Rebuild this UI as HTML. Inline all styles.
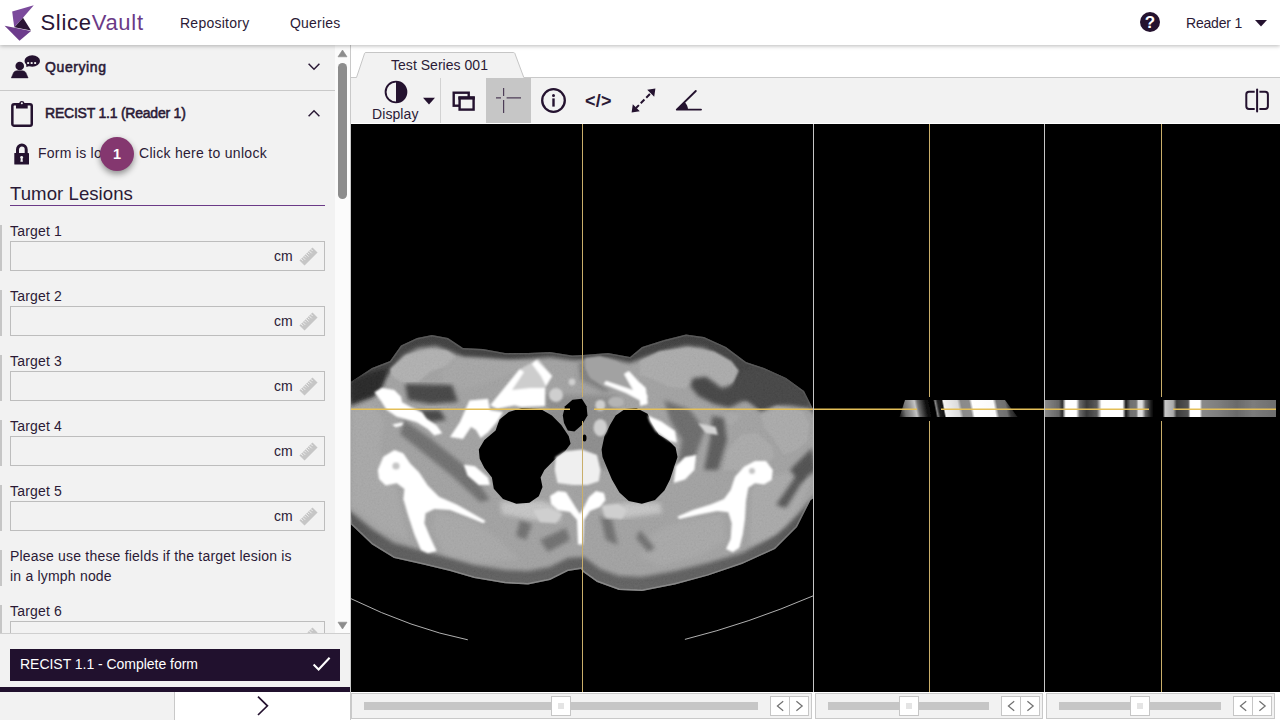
<!DOCTYPE html>
<html lang="en">
<head>
<meta charset="utf-8">
<title>SliceVault</title>
<style>
*{box-sizing:border-box;margin:0;padding:0}
html,body{width:1280px;height:720px;overflow:hidden;background:#fff}
body{font-family:"Liberation Sans",sans-serif;font-size:14px;color:#2b1a36;position:relative}
.abs{position:absolute}
.t{position:absolute;white-space:nowrap;line-height:20px}
svg{position:absolute;overflow:visible}
/* header */
#hdr{position:absolute;left:0;top:0;width:1280px;height:45px;background:#fff;box-shadow:0 1px 4px rgba(0,0,0,.28);z-index:5}
/* left panel */
#left{position:absolute;left:0;top:45px;width:335px;height:588px;background:#f2f2f2;overflow:hidden}
#sb{position:absolute;left:335px;top:45px;width:15px;height:588px;background:#fbfbfb}
#leftbot{position:absolute;left:0;top:633px;width:351px;height:87px;background:#f2f2f2;border-top:1px solid #cfcfcf}
.row{position:absolute;left:0;width:335px;border-bottom:1px solid #c9c9c9}
.bar{position:absolute;left:0;width:2px;background:#c6c6c6}
.lbl{position:absolute;left:10px;white-space:nowrap;line-height:20px}
.inp{position:absolute;left:10px;width:315px;height:30px;border:1px solid #bdbdbd;background:#f2f2f2}
.cm{position:absolute;left:274px;white-space:nowrap;line-height:20px}
/* viewer */
#viewer{position:absolute;left:350px;top:45px;width:930px;height:675px;background:#fff;border-left:1px solid #c9c9c9}
#tool{position:absolute;left:351px;top:77px;width:929px;height:46px;background:#f2f2f2;border-top:1px solid #c9c9c9}
#black{position:absolute;left:351px;top:124px;width:929px;height:568px;background:#000;overflow:hidden}
.sl{position:absolute;top:693px;height:26px;background:#f2f2f2;border:1px solid #c9c9c9}
.trk{position:absolute;top:702px;height:8px;background:#c6c6c6}
.thumb{position:absolute;top:696px;width:20px;height:20px;background:#fff;border:1px solid #c6c6c6}
.thumb i{position:absolute;left:6px;top:6px;width:6px;height:6px;background:#e4e4e4}
.btns{position:absolute;top:696px;width:39px;height:20px;background:#fff;border:1px solid #c6c6c6}
.btns b{position:absolute;left:18px;top:0;width:1px;height:18px;background:#c6c6c6}
.btns svg{left:0;top:0}
</style>
</head>
<body>

<!-- ================= LEFT PANEL ================= -->
<div id="left">
  <!-- Querying row : page y 45..90 -->
  <div class="row" style="top:0;height:46px"></div>
  <svg style="left:11px;top:10px" width="30" height="24" viewBox="0 0 30 24">
    <circle cx="8.75" cy="11" r="4.3" fill="#24122f"/>
    <path d="M0.3 22.9 L2.5 17.7 Q3.5 15.7 6 15.7 H11.4 Q13.9 15.7 14.9 17.7 L17.1 22.9 Z" fill="#24122f" stroke="#24122f" stroke-width=".5" stroke-linejoin="round"/>
    <ellipse cx="21.25" cy="6" rx="7.75" ry="5.75" fill="#24122f"/>
    <path d="M15.2 8.2 L15.4 11.9 L19.6 10.8 Z" fill="#24122f"/>
    <rect x="16.2" y="7.1" width="1.9" height="1.9" fill="#f2f2f2"/><rect x="19.7" y="7.1" width="1.9" height="1.9" fill="#f2f2f2"/><rect x="23.2" y="7.1" width="1.9" height="1.9" fill="#f2f2f2"/>
  </svg>
  <span class="t" style="left:45px;top:12px;-webkit-text-stroke:.55px #2b1a36;letter-spacing:.6px">Querying</span>
  <svg style="left:307px;top:17px" width="14" height="10" viewBox="0 0 14 10"><path d="M1.6 1.8 L7 7.2 L12.4 1.8" fill="none" stroke="#2b1a36" stroke-width="1.5"/></svg>

  <!-- RECIST row : page y 91..135 -->
  <svg style="left:10px;top:54px" width="24" height="29" viewBox="0 0 24 29">
    <rect x="2.35" y="5.25" width="19.4" height="21.5" rx="1.8" fill="none" stroke="#24122f" stroke-width="2.5"/>
    <path d="M6 4.3 H9.1 A2.8 2.8 0 0 1 14.6 4.3 H17.7 V9.4 H6 Z" fill="#24122f"/>
    <circle cx="11.85" cy="4.3" r="1.05" fill="#f2f2f2"/>
  </svg>
  <span class="t" style="left:45px;top:58px;-webkit-text-stroke:.55px #2b1a36;letter-spacing:-.22px">RECIST 1.1 (Reader 1)</span>
  <svg style="left:307px;top:63px" width="14" height="10" viewBox="0 0 14 10"><path d="M1.6 8.2 L7 2.8 L12.4 8.2" fill="none" stroke="#2b1a36" stroke-width="1.5"/></svg>

  <!-- lock row -->
  <svg style="left:13px;top:97px" width="17" height="24" viewBox="0 0 17 24">
    <path d="M4.5 12 V7.45 A4.35 4.35 0 0 1 13.2 7.45 V12" fill="none" stroke="#24122f" stroke-width="3"/>
    <rect x="1.3" y="11" width="14.7" height="11.5" rx=".6" fill="#24122f"/>
    <circle cx="8.65" cy="15.4" r="1.45" fill="#f2f2f2"/><path d="M7.9 15.8 H9.4 L9.9 19.8 H7.4 Z" fill="#f2f2f2"/>
  </svg>
  <span class="t" style="left:38px;top:98px;letter-spacing:.25px;width:90px;overflow:hidden">Form is locked.</span>
  <span class="t" style="left:139px;top:98px;letter-spacing:.29px">Click here to unlock</span>
  <div class="abs" style="left:100px;top:92px;width:34px;height:34px;border-radius:50%;background:#84376f;box-shadow:0 3px 6px rgba(0,0,0,.42)"></div>
  <span class="t" style="left:100px;top:99px;width:34px;text-align:center;color:#fff;font-weight:700;font-size:14.5px">1</span>

  <!-- heading -->
  <span class="t" style="left:10px;top:137px;font-size:18.6px;line-height:24px;letter-spacing:.05px">Tumor Lesions</span>
  <div class="abs" style="left:10px;top:160px;width:315px;height:1px;background:#6b3a87"></div>

  <!-- fields -->
  <div class="bar" style="top:180px;height:46px"></div>
  <span class="lbl" style="top:176px;letter-spacing:.18px">Target 1</span>
  <div class="inp" style="top:196px"></div><span class="cm" style="top:201px">cm</span><svg style="left:298px;top:201px" width="21" height="21" viewBox="0 0 21 21"><g transform="translate(10.5 10.5) rotate(-45)"><rect x="-9.2" y="-3.6" width="18.4" height="7.2" fill="#c6c6c6"/><path d="M-7 -3.6v2.6M-4.7 -3.6v3.6M-2.4 -3.6v2.6M-0.1 -3.6v3.6M2.2 -3.6v2.6M4.5 -3.6v3.6M6.8 -3.6v2.6" stroke="#f2f2f2" stroke-width=".9" fill="none"/></g></svg>

  <div class="bar" style="top:245px;height:46px"></div>
  <span class="lbl" style="top:241px;letter-spacing:.18px">Target 2</span>
  <div class="inp" style="top:261px"></div><span class="cm" style="top:266px">cm</span><svg style="left:298px;top:266px" width="21" height="21" viewBox="0 0 21 21"><g transform="translate(10.5 10.5) rotate(-45)"><rect x="-9.2" y="-3.6" width="18.4" height="7.2" fill="#c6c6c6"/><path d="M-7 -3.6v2.6M-4.7 -3.6v3.6M-2.4 -3.6v2.6M-0.1 -3.6v3.6M2.2 -3.6v2.6M4.5 -3.6v3.6M6.8 -3.6v2.6" stroke="#f2f2f2" stroke-width=".9" fill="none"/></g></svg>

  <div class="bar" style="top:310px;height:46px"></div>
  <span class="lbl" style="top:306px;letter-spacing:.18px">Target 3</span>
  <div class="inp" style="top:326px"></div><span class="cm" style="top:331px">cm</span><svg style="left:298px;top:331px" width="21" height="21" viewBox="0 0 21 21"><g transform="translate(10.5 10.5) rotate(-45)"><rect x="-9.2" y="-3.6" width="18.4" height="7.2" fill="#c6c6c6"/><path d="M-7 -3.6v2.6M-4.7 -3.6v3.6M-2.4 -3.6v2.6M-0.1 -3.6v3.6M2.2 -3.6v2.6M4.5 -3.6v3.6M6.8 -3.6v2.6" stroke="#f2f2f2" stroke-width=".9" fill="none"/></g></svg>

  <div class="bar" style="top:375px;height:46px"></div>
  <span class="lbl" style="top:371px;letter-spacing:.18px">Target 4</span>
  <div class="inp" style="top:391px"></div><span class="cm" style="top:396px">cm</span><svg style="left:298px;top:396px" width="21" height="21" viewBox="0 0 21 21"><g transform="translate(10.5 10.5) rotate(-45)"><rect x="-9.2" y="-3.6" width="18.4" height="7.2" fill="#c6c6c6"/><path d="M-7 -3.6v2.6M-4.7 -3.6v3.6M-2.4 -3.6v2.6M-0.1 -3.6v3.6M2.2 -3.6v2.6M4.5 -3.6v3.6M6.8 -3.6v2.6" stroke="#f2f2f2" stroke-width=".9" fill="none"/></g></svg>

  <div class="bar" style="top:440px;height:46px"></div>
  <span class="lbl" style="top:436px;letter-spacing:.18px">Target 5</span>
  <div class="inp" style="top:456px"></div><span class="cm" style="top:461px">cm</span><svg style="left:298px;top:461px" width="21" height="21" viewBox="0 0 21 21"><g transform="translate(10.5 10.5) rotate(-45)"><rect x="-9.2" y="-3.6" width="18.4" height="7.2" fill="#c6c6c6"/><path d="M-7 -3.6v2.6M-4.7 -3.6v3.6M-2.4 -3.6v2.6M-0.1 -3.6v3.6M2.2 -3.6v2.6M4.5 -3.6v3.6M6.8 -3.6v2.6" stroke="#f2f2f2" stroke-width=".9" fill="none"/></g></svg>

  <div class="bar" style="top:505px;height:36px"></div>
  <span class="lbl" style="top:501px;letter-spacing:.2px">Please use these fields if the target lesion is</span>
  <span class="lbl" style="top:521px;letter-spacing:.2px">in a lymph node</span>

  <div class="bar" style="top:560px;height:46px"></div>
  <span class="lbl" style="top:556px;letter-spacing:.18px">Target 6</span>
  <div class="inp" style="top:576px"></div><svg style="left:298px;top:581px" width="21" height="21" viewBox="0 0 21 21"><g transform="translate(10.5 10.5) rotate(-45)"><rect x="-9.2" y="-3.6" width="18.4" height="7.2" fill="#c6c6c6"/><path d="M-7 -3.6v2.6M-4.7 -3.6v3.6M-2.4 -3.6v2.6M-0.1 -3.6v3.6M2.2 -3.6v2.6M4.5 -3.6v3.6M6.8 -3.6v2.6" stroke="#f2f2f2" stroke-width=".9" fill="none"/></g></svg>
</div>

<!-- scrollbar -->
<div id="sb">
  <svg style="left:3px;top:5px" width="9" height="7" viewBox="0 0 9 7"><path d="M0 6.8 L4.5 0 L9 6.8 Z" fill="#8c8c8c" stroke="#8c8c8c" stroke-width=".6" stroke-linejoin="round"/></svg>
  <div class="abs" style="left:3px;top:18px;width:9px;height:136px;border-radius:4.5px;background:#8c8c8c"></div>
  <svg style="left:3px;top:577px" width="9" height="7" viewBox="0 0 9 7"><path d="M0 0.2 L4.5 7 L9 0.2 Z" fill="#8c8c8c" stroke="#8c8c8c" stroke-width=".6" stroke-linejoin="round"/></svg>
</div>

<!-- bottom of left panel -->
<div id="leftbot">
  <div class="abs" style="left:10px;top:15px;width:330px;height:32px;background:#21112e"></div>
  <span class="t" style="left:20px;top:20px;color:#fff;letter-spacing:-.03px">RECIST 1.1 - Complete form</span>
  <svg style="left:312px;top:22px" width="20" height="16" viewBox="0 0 20 16"><path d="M1.6 8.6 L6.6 13.4 L17.6 1.8" fill="none" stroke="#fff" stroke-width="2.1"/></svg>
  <div class="abs" style="left:0;top:53px;width:350px;height:5px;background:#21112e"></div>
  <div class="abs" style="left:174px;top:58px;width:177px;height:28px;background:#fff;border-left:1px solid #c9c9c9"></div>
  <svg style="left:255.5px;top:61px" width="14" height="22" viewBox="0 0 14 22"><path d="M2 1.6 L11.4 10.8 L2 20" fill="none" stroke="#24122f" stroke-width="1.7"/></svg>
</div>

<!-- ================= VIEWER ================= -->
<div id="viewer"></div>
<div id="tool"></div>
<!-- tab -->
<svg style="left:351px;top:50px" width="180" height="30" viewBox="0 0 180 30">
  <path d="M5.2 28.6 L5.5 27.5 L13.6 3.3 Q13.9 2.5 15 2.5 L162.3 2.5 Q163.4 2.5 163.8 3.3 L172.8 27.5 L173.2 28.6 Z" fill="#f2f2f2"/>
  <path d="M5.5 27.5 L13.6 3.3 Q13.9 2.5 15 2.5 L162.3 2.5 Q163.4 2.5 163.8 3.3 L172.8 27.5" fill="none" stroke="#c6c6c6" stroke-width="1"/>
</svg>
<span class="t" style="left:391px;top:55px;letter-spacing:.03px">Test Series 001</span>
<!-- toolbar icons -->
<div class="abs" style="left:486px;top:78px;width:45px;height:45px;background:#c6c6c6"></div>
<div class="abs" style="left:440px;top:78px;width:1px;height:45px;background:#d2d2d2"></div>
<svg style="left:383.6px;top:80.4px" width="24" height="24" viewBox="0 0 24 24">
  <circle cx="12" cy="12" r="10.4" fill="none" stroke="#24122f" stroke-width="1.9"/>
  <path d="M12 1.6 A10.4 10.4 0 0 1 12 22.4 Z" fill="#24122f"/>
</svg>
<span class="t" style="left:372px;top:104px;letter-spacing:.08px">Display</span>
<svg style="left:422px;top:97px" width="14" height="8" viewBox="0 0 14 8"><path d="M1 0.8 H13 L7 7.4 Z" fill="#24122f"/></svg>
<svg style="left:451px;top:90px" width="25" height="22" viewBox="0 0 25 22">
  <rect x="2.7" y="2.7" width="15" height="13" fill="none" stroke="#24122f" stroke-width="2.4"/>
  <rect x="8.6" y="7.6" width="14" height="12" fill="#f2f2f2" stroke="#24122f" stroke-width="2.4"/>
  <rect x="7.4" y="6.4" width="16.4" height="3.2" fill="#24122f"/>
</svg>
<svg style="left:494px;top:86px" width="30" height="30" viewBox="0 0 30 30">
  <path d="M9.6 2 V10 M9.6 14 V27 M2 11.9 H7 M12.6 11.9 H27" fill="none" stroke="#4d3d57" stroke-width="1.2"/>
</svg>
<svg style="left:540px;top:87px" width="27" height="27" viewBox="0 0 27 27">
  <circle cx="13.5" cy="13.5" r="11.3" fill="none" stroke="#24122f" stroke-width="2.3"/>
  <circle cx="13.5" cy="8.4" r="1.5" fill="#24122f"/>
  <rect x="12.3" y="11.4" width="2.4" height="8.2" fill="#24122f"/>
</svg>
<span class="t" style="left:585px;top:90px;font-size:18px;font-weight:700;line-height:22px;letter-spacing:.3px">&lt;/&gt;</span>
<svg style="left:630px;top:87px" width="27" height="27" viewBox="0 0 27 27">
  <path d="M25.4 1.6 L17.2 2.8 L24.2 9.8 Z M1.6 25.4 L9.8 24.2 L2.8 17.2 Z" fill="#24122f"/>
  <path d="M21 6 L6 21" fill="none" stroke="#24122f" stroke-width="2" stroke-dasharray="5.2 2.6" stroke-dashoffset="-1.5"/>
</svg>
<svg style="left:675px;top:89px" width="28" height="23" viewBox="0 0 28 23">
  <path d="M20.8 2 L1.8 20.6 H26" fill="none" stroke="#24122f" stroke-width="1.9" stroke-linejoin="round" stroke-linecap="round"/>
  <path d="M1.8 20.6 L9.6 13 A11 11 0 0 1 13 20.6 Z" fill="#24122f"/>
</svg>
<svg style="left:1244px;top:87px" width="27" height="27" viewBox="0 0 27 27">
  <path d="M10.7 4.8 H5 Q2.3 4.8 2.3 7.5 V19.3 Q2.3 22 5 22 H10.7 M15.4 4.8 H21.2 Q23.9 4.8 23.9 7.5 V19.3 Q23.9 22 21.2 22 H15.4" fill="none" stroke="#24122f" stroke-width="2"/>
  <path d="M13.1 2.4 V24.6" stroke="#24122f" stroke-width="2" stroke-linecap="round"/>
</svg>
<div id="black"><!--CT--><svg style="left:0;top:0" width="929" height="568" viewBox="351 124 929 568">
  <defs>
    <filter id="b0" x="-10%" y="-10%" width="120%" height="120%"><feGaussianBlur stdDeviation="0.6"/></filter>
    <filter id="b1" x="-10%" y="-10%" width="120%" height="120%"><feGaussianBlur stdDeviation="1"/></filter>
    <filter id="b2" x="-10%" y="-10%" width="120%" height="120%"><feGaussianBlur stdDeviation="2"/></filter>
    <filter id="b3" x="-20%" y="-20%" width="140%" height="140%"><feGaussianBlur stdDeviation="3.5"/></filter>
    <filter id="nz" x="0" y="0" width="100%" height="100%"><feTurbulence type="fractalNoise" baseFrequency=".55" numOctaves="2" seed="7"/><feColorMatrix type="matrix" values=".4 .4 .4 0 -.1  .4 .4 .4 0 -.1  .4 .4 .4 0 -.1  0 0 0 0 1"/></filter>
    <linearGradient id="fat" gradientUnits="userSpaceOnUse" x1="0" y1="335" x2="0" y2="590"><stop offset="0" stop-color="#363636"/><stop offset=".45" stop-color="#3e3e3e"/><stop offset="1" stop-color="#5c5c5c"/></linearGradient>
    <linearGradient id="skin" gradientUnits="userSpaceOnUse" x1="0" y1="335" x2="0" y2="590"><stop offset="0" stop-color="#505050"/><stop offset=".5" stop-color="#5c5c5c"/><stop offset="1" stop-color="#8c8c8c"/></linearGradient>
    <clipPath id="ax"><rect x="351" y="124" width="462" height="568"/></clipPath>
        <clipPath id="body"><path d="M345 386 L372 368 L390 361 L401 345.5 L417 338 L432 335 L448 338 L463 348 L483 349 L505 353 L528 353 L550 352 L572 355.5 L583 355 L608 353 L630 357 L642 347 L664 340 L686 334.5 L704 337 L726 347 L746 362 L764 368 L786 378 L804 391 L813 409 L822 450 L814 498 L810.6 500 L797 527 L775 549 L742 564 L708 575.6 L675 584.4 L642 591 L619 590 L597 582 L583 572 L581 569 L568 571 L550 580 L528 584.4 L505 583.3 L474 578 L450 571 L423 564.4 L394 558 L372 544.4 L351 524.4 L340 450 Z"/></clipPath>
  </defs>
  <g clip-path="url(#ax)">
    <!-- skin / fat -->
    <path filter="url(#b0)" fill="url(#fat)" d="M345 386 L372 368 L390 361 L401 345.5 L417 338 L432 335 L448 338 L463 348 L483 349 L505 353 L528 353 L550 352 L572 355.5 L583 355 L608 353 L630 357 L642 347 L664 340 L686 334.5 L704 337 L726 347 L746 362 L764 368 L786 378 L804 391 L813 409 L822 450 L814 498 L810.6 500 L797 527 L775 549 L742 564 L708 575.6 L675 584.4 L642 591 L619 590 L597 582 L583 572 L581 569 L568 571 L550 580 L528 584.4 L505 583.3 L474 578 L450 571 L423 564.4 L394 558 L372 544.4 L351 524.4 L340 450 Z"/>
    <g clip-path="url(#body)"><path filter="url(#b0)" fill="none" stroke="url(#skin)" stroke-opacity=".85" stroke-width="3" d="M345 386 L372 368 L390 361 L401 345.5 L417 338 L432 335 L448 338 L463 348 L483 349 L505 353 L528 353 L550 352 L572 355.5 L583 355 L608 353 L630 357 L642 347 L664 340 L686 334.5 L704 337 L726 347 L746 362 L764 368 L786 378 L804 391 L813 409 L822 450 L814 498 L810.6 500 L797 527 L775 549 L742 564 L708 575.6 L675 584.4 L642 591 L619 590 L597 582 L583 572 L581 569 L568 571 L550 580 L528 584.4 L505 583.3 L474 578 L450 571 L423 564.4 L394 558 L372 544.4 L351 524.4 L340 450 Z"/></g>
    <g clip-path="url(#body)">
      <!-- muscle mass -->
      <path filter="url(#b2)" fill="#a0a0a0" d="M346 401 L372 396 L388 374 L403 356 L418 348 L436 346 L452 352 L464 358 L484 359 L506 361 L528 359 L550 357 L572 360 L584 360 L608 358 L630 363 L646 357 L664 351 L686 346 L704 348 L722 358 L736 372 L730 392 L760 408 L790 402 L808 406 L820 420 L820 490 L800 512 L785 527 L768 539 L742 553 L708 563 L675 571 L642 577 L619 576 L600 569 L584 557 L568 558 L550 567 L528 571 L505 570 L474 565 L450 558 L423 551 L394 543 L372 529 L346 508 Z"/>
      <!-- brighter muscles -->
      <path filter="url(#b1)" fill="#afafaf" d="M390 369 L406 355 L430 349 L447 350.5 L456 357 L447 366 L430 372 L418 382 L403 383 L392 376 Z"/>
      <path filter="url(#b2)" fill="#a4a4a4" d="M456 357 L519 361 L540 362 L500 378 L470 388 L447 388 L440 374 Z"/>
      <path filter="url(#b1)" fill="#aaa" d="M640 361 L659 351.4 L688.6 347.5 L714 351.4 L731.4 361 L739 371 L733 382.5 L721.7 387.4 L712 380.6 L704 376.7 L694.4 380.6 L684.7 388.3 L669 386.4 L651.7 378.6 L640 374.7 Z"/>
      <path filter="url(#b1)" fill="#a9a9a9" d="M760.5 413.6 L776 405.8 L801.4 409.7 L809 423.3 L807 440.8 L795.5 450.6 L784 454.4 L774 439 L764.4 427.2 Z"/>
      <path filter="url(#b1)" fill="#a9a9a9" d="M727.5 450.6 L741 435 L756.7 433 L772 446.7 L774 456.4 L760.5 470 L723.6 470 Z"/>
      <path filter="url(#b1)" fill="#a6a6a6" d="M721.7 415.6 L731.4 411.7 L741 415.6 L733 425 L723.6 423.3 Z"/>
      <path filter="url(#b2)" fill="#a6a6a6" d="M352 410 L372 404 L384 420 L380 450 L396 488 L408 540 L380 528 L352 505 Z"/>
      <path filter="url(#b2)" fill="#a6a6a6" d="M436 512 L470 520 L500 540 L520 560 L480 562 L445 554 L432 530 Z"/>
      <path filter="url(#b2)" fill="#a6a6a6" d="M668 525 L722 514 L726 540 L700 556 L660 566 L640 556 L650 536 Z"/>
      <path filter="url(#b2)" fill="#a8a8a8" d="M752 490 L776 476 L800 470 L812 480 L796 512 L776 534 L750 545 Z"/>
      <!-- dark fat pockets -->
      <path filter="url(#b2)" fill="#3e3e3e" d="M405 384 L452 385 L458 402 L430 404 L408 400 Z"/>
      <path filter="url(#b2)" fill="#3c3c3c" d="M692.5 378.6 L706 376.7 L721.7 388.3 L735.3 384.4 L741 371 L760.5 369 L787.8 378.6 L805.3 396 L811 407.8 L776 404 L760.5 411.7 L749 398 L729.4 407.8 L714 404 L698.3 396 L690.6 386.4 Z"/>
      <path filter="url(#b2)" fill="#1c1c1c" d="M350 380 L372 372 L388 368 L382 388 L374 396 L350 406 Z"/>
      <path filter="url(#b2)" fill="#6a6a6a" d="M404 420 L430 438 L470 470 L490 500 L480 502 L452 476 L420 450 L400 434 Z"/>
      <path filter="url(#b2)" fill="#666" d="M664 400 L690 410 L705 430 L690 470 L676 474 L682 440 L670 420 Z"/>
      <path filter="url(#b2)" fill="#555" d="M712 416 L724 418 L727 440 L718 470 L704 470 L710 440 Z"/>
      <path filter="url(#b2)" fill="#505050" d="M776 505 L800 470 L806 476 L786 508 Z"/>
      <path filter="url(#b2)" fill="#484848" d="M790 470 L812 448 L816 470 L800 482 Z"/>
      <path filter="url(#b2)" fill="#6a6a6a" d="M600 515 L612 520 L618 545 L606 540 Z M540 540 L566 528 L570 540 L548 552 Z M640 530 L655 548 L648 552 L636 538 Z M520 520 L532 524 L526 540 L516 536 Z"/>
      <path filter="url(#b2)" fill="#3c3c3c" d="M412 410 L440 410 L446 420 L430 422 Z"/>
      <!-- center mediastinum / neck tissue -->
      <path filter="url(#b2)" fill="#8a8a8a" d="M545 395 L620 395 L615 440 L606 470 L556 470 L550 440 Z"/>
      <path filter="url(#b2)" fill="#7c7c7c" d="M578 362 L610 362 L626 384 L604 392 L580 380 Z"/>
      <!-- light bands along lung bottoms (ribs) -->
      <path filter="url(#b2)" fill="#c4c4c4" d="M500 502 L542 501 L562 508 L560 522 L534 520 L502 514 Z"/>
      <path filter="url(#b2)" fill="#c4c4c4" d="M602 506 L627 503 L660 503 L662 513 L626 518 L604 518 Z"/>
      <rect x="351" y="330" width="462" height="265" filter="url(#nz)" opacity=".1"/>
    </g>
    <!-- lungs -->
    <path filter="url(#b0)" fill="#000" d="M478.8 449.4 L484.4 440 L495.6 430.6 L499.4 419.4 L508.8 411.9 L521.9 408 L540.6 409 L551.9 415.6 L561.3 425 L568.8 436.3 L570.6 443.8 L565 451.3 L553.8 460.6 L544.4 470 L540.6 477.5 L542.5 486.9 L538.8 496.3 L529.4 502.8 L516.3 503.8 L503 499 L493.8 488.8 L491.9 477.5 L484.4 468 L479.7 458.8 Z"/>
    <path filter="url(#b0)" fill="#000" d="M601.6 449.4 L604.4 436.3 L610 425 L615.6 415.6 L625 409 L636.3 408 L647.5 413.8 L653 425 L658.8 434.4 L668 440 L675.6 447.5 L677.5 456.9 L673.8 468 L670 479.4 L664.4 490.6 L655 500 L641.9 503.8 L628.8 501 L619.4 492.5 L611.9 479.4 L606.3 466.3 L602.5 456.9 Z"/>
    <!-- trachea -->
    <path filter="url(#b0)" fill="#000" d="M562.8 415.6 L565 406.3 L572.5 399.7 L581.9 398.8 L586.6 406.3 L587.5 415.6 L581.9 425 L574.4 431.6 L567.8 430.6 L564 423 Z"/>
    <ellipse cx="584.5" cy="438" rx="2" ry="3.6" fill="#000"/>
    <!-- vessels -->
    <g filter="url(#b1)" fill="#cfcfcf">
      <circle cx="556" cy="395" r="7"/><circle cx="572" cy="382" r="3.4"/>
      <ellipse cx="600.3" cy="427.7" rx="6.8" ry="8.6"/><ellipse cx="600.3" cy="405.3" rx="5" ry="5.6"/>
      <ellipse cx="616" cy="402" rx="8" ry="5.4" fill="#b4b4b4"/>
    </g>
    <!-- bones -->
    <g filter="url(#b1)" fill="#fff">
      <!-- left humerus / coracoid -->
      <path d="M374.4 392.2 L382.2 387.8 L394.4 390 L401 396.7 L402.2 402.2 L412.2 407.8 L422.2 412.2 L426.7 419 L436.7 425.6 L442.2 433.3 L434.4 435.6 L427.8 429 L416.7 422.2 L405.6 419 L396.7 416.7 L386.7 410 L381 401 Z"/><path d="M392.2 424.4 L403.3 422.2 L402.2 425.6 L395.6 427.2 Z"/>
      <!-- 1st rib left -->
      <path d="M450 437 L460 422 L469.4 400.6 L488 398.8 L490 410 L503 411.9 L497.5 421.3 L488 432.5 L480.6 438 L476 430 L471 427 L463 439 Z"/>
      <!-- left clavicle -->
      <path d="M490.3 405.3 L519.5 369.2 L538.4 358.9 L552.2 376 L545.3 388 L543.6 396.7 L514.4 405.3 L497.2 408.8 Z" fill="#cdcdcd"/>
      <path d="M490.3 405.3 L506 386 L519.5 369.2 L524 372 L512 390 L530 388 L545.3 388 L545 406 L521 407 L514.4 405.3 L497.2 408.8 Z"/>
      <path d="M536 360 L552.2 376 L546 386 L541 376 L532 364 Z"/>
      <!-- right clavicle -->
      <path d="M585 358 L600 356 L617.5 362 L629.5 372.7 L645 390 L648.4 400 L640 403.6 L626 396.7 L605.5 388 L590 378 L585 368 Z" fill="#a2a2a2"/>
      <path d="M603.8 384 L626 393 L641 401 L648 397 L640 383 L629 371 L624 374 L633 390 L606 381 Z"/>
      <path d="M640 382.5 L645.8 388 L647.8 404 L640 406 Z"/>
      <!-- right 1st rib -->
      <path d="M647.8 415.6 L661.4 421.4 L675 431 L677 442.8 L669 440.8 L655.6 431 L649.7 421.4 Z"/>
      <path d="M698 423 L715.8 427 L717.8 435 L706 433 Z" fill="#d4d4d4"/>
      <!-- left scapula -->
      <path d="M377.8 470 L383.3 456.7 L394.4 450 L403.3 453.3 L410 463.3 L419 472.2 L427.8 485.6 L439 496.7 L456.7 504.4 L474.4 514.4 L485.6 521 L483.3 523.3 L470 517.8 L450 510 L434.4 509 L425.6 513.3 L424.4 523.3 L430 536.7 L436.7 551 L427.8 553.3 L421 550 L414.4 534.4 L407.8 514.4 L403.3 499 L404.4 489 L396.7 483.3 L385.6 485.6 L379 479 Z"/>
      <!-- right scapula -->
      <path d="M735 476.7 L744 466.7 L755 461 L766 461 L772.8 470 L771.7 480 L764 484.4 L755 483.3 L748.3 487.8 L746 501 L745 519 L742.8 534.4 L739.4 547.8 L732.8 552.2 L726 549 L730.6 539 L731.7 523.3 L728.3 512.2 L717.2 511 L699.4 514.4 L679.4 519 L677.2 516.7 L692.8 510 L710.6 504.4 L724 499 L730.6 490 Z"/>
      <!-- ribs near lungs -->
      <path d="M463.8 464.4 L475 466.3 L488 477.5 L490 485 L478.8 485 L467.5 475.6 Z"/>
      <path d="M675.6 466.3 L685 457 L696.3 455 L694.4 470 L685 479.4 L673.8 483 Z"/>
      <!-- vertebra -->
      <path d="M555.6 457 L565 451.3 L582 449.4 L597 455 L600.6 470 L598.8 481.3 L587.5 485 L572.5 485 L557.5 483 L554.7 470 Z" fill="#efefef"/>
      <path d="M550 496 L558 491 L566 492 L571 500 L576 508 L580 514 L584 507 L589 497 L596 491 L604 493 L605.6 500 L600 507 L590 511 L584 520 L583 544.4 L578 544.4 L577 520 L570 512 L558 510 L551 504 Z"/>
      <path d="M533 510 L548 508 L562 514 L556 523 L540 522 Z" fill="#cfcfcf"/>
      <path d="M602 506 L618 504 L627 510 L622 519 L606 517 Z" fill="#cfcfcf"/>
    </g>
    <!-- scapula marrow -->
    <g filter="url(#b1)" fill="#c4c4c4"><circle cx="396" cy="466" r="3.6"/><circle cx="752" cy="471" r="3"/></g>
    <!-- table lines -->
    <path d="M351 598.7 Q412.6 628.7 467.8 639.8" fill="none" stroke="#c4c4c4" stroke-width=".9"/>
    <path d="M684.9 639.4 Q748.9 623.4 813 595.9" fill="none" stroke="#c4c4c4" stroke-width=".9"/>
  </g>

  <!-- sagittal strip -->
  <defs>
    <linearGradient id="gs" gradientUnits="userSpaceOnUse" x1="899" y1="0" x2="1018" y2="0" gradientTransform="translate(0 408.5) skewX(11) translate(0 -408.5)">
      <stop offset="0" stop-color="#222"/><stop offset=".05" stop-color="#777"/><stop offset=".1" stop-color="#9a9a9a"/><stop offset=".14" stop-color="#c4c4c4"/><stop offset=".165" stop-color="#707070"/><stop offset=".2" stop-color="#3c3c3c"/><stop offset=".235" stop-color="#0a0a0a"/><stop offset=".3" stop-color="#000"/><stop offset=".315" stop-color="#888"/><stop offset=".335" stop-color="#222"/><stop offset=".37" stop-color="#111"/><stop offset=".385" stop-color="#f4f4f4"/><stop offset=".5" stop-color="#dcdcdc"/><stop offset=".53" stop-color="#8a8a8a"/><stop offset=".6" stop-color="#8c8c8c"/><stop offset=".625" stop-color="#fff"/><stop offset=".8" stop-color="#fafafa"/><stop offset=".83" stop-color="#777"/><stop offset=".9" stop-color="#707070"/><stop offset=".93" stop-color="#3a3a3a"/><stop offset="1" stop-color="#111"/>
    </linearGradient>
    <linearGradient id="gc" gradientUnits="userSpaceOnUse" x1="1045" y1="0" x2="1276" y2="0">
      <stop offset="0" stop-color="#8a8a8a"/><stop offset=".06" stop-color="#666"/><stop offset=".075" stop-color="#2c2c2c"/><stop offset=".09" stop-color="#fff"/><stop offset=".135" stop-color="#fff"/><stop offset=".15" stop-color="#6c6c6c"/><stop offset=".18" stop-color="#3a3a3a"/><stop offset=".225" stop-color="#5c5c5c"/><stop offset=".245" stop-color="#fff"/><stop offset=".335" stop-color="#fff"/><stop offset=".35" stop-color="#1c1c1c"/><stop offset=".37" stop-color="#707070"/><stop offset=".395" stop-color="#777"/><stop offset=".405" stop-color="#e0e0e0"/><stop offset=".42" stop-color="#ddd"/><stop offset=".435" stop-color="#666"/><stop offset=".46" stop-color="#1a1a1a"/><stop offset=".47" stop-color="#000"/><stop offset=".51" stop-color="#000"/><stop offset=".52" stop-color="#c8c8c8"/><stop offset=".555" stop-color="#aaa"/><stop offset=".57" stop-color="#3c3c3c"/><stop offset=".62" stop-color="#555"/><stop offset=".63" stop-color="#fff"/><stop offset=".67" stop-color="#fff"/><stop offset=".68" stop-color="#8a8a8a"/><stop offset=".75" stop-color="#7e7e7e"/><stop offset=".83" stop-color="#6a6a6a"/><stop offset=".9" stop-color="#7c7c7c"/><stop offset="1" stop-color="#6e6e6e"/>
    </linearGradient>
  </defs>
  <path filter="url(#b0)" fill="url(#gs)" d="M905 400 L1005 400 L1017.5 417 L899.5 417 Z"/>
  <rect filter="url(#b0)" x="1045" y="400" width="231" height="17" fill="url(#gc)"/>
  <!-- panel separators -->
  <rect x="813" y="124" width="1" height="568" fill="#c6c6c6"/>
  <rect x="1044" y="124" width="1" height="568" fill="#c6c6c6"/>
  <!-- crosshairs -->
  <g fill="#c9ae6a">
    <rect x="582" y="124" width="1" height="273"/><rect x="582" y="421" width="1" height="271"/>
    <rect x="929" y="124" width="1" height="273"/><rect x="929" y="421" width="1" height="271"/>
    <rect x="1161" y="124" width="1" height="273"/><rect x="1161" y="421" width="1" height="271"/>
  </g>
  <g fill="#e4bf58">
    <rect x="351" y="408.5" width="219" height="1.5"/><rect x="594" y="408.5" width="219" height="1.5"/>
    <rect x="814" y="408.5" width="103" height="1.5"/><rect x="941" y="408.5" width="103" height="1.5"/>
    <rect x="1045" y="408.5" width="104" height="1.5"/><rect x="1173" y="408.5" width="103" height="1.5"/>
  </g>
</svg>
<!--/CT--></div>

<!-- sliders -->
<div class="sl" style="left:351px;width:461px"></div>
<div class="trk" style="left:364px;width:394px"></div>
<div class="thumb" style="left:551px"><i></i></div>
<div class="btns" style="left:770px"><b></b><svg width="37" height="18" viewBox="0 0 37 18"><path d="M12.2 4.2 L6.4 9 L12.2 13.8 M25.4 4.2 L31.2 9 L25.4 13.8" fill="none" stroke="#707070" stroke-width="1.2"/></svg></div>

<div class="sl" style="left:815px;width:228px"></div>
<div class="trk" style="left:828px;width:161px"></div>
<div class="thumb" style="left:899px"><i></i></div>
<div class="btns" style="left:1001px"><b></b><svg width="37" height="18" viewBox="0 0 37 18"><path d="M12.2 4.2 L6.4 9 L12.2 13.8 M25.4 4.2 L31.2 9 L25.4 13.8" fill="none" stroke="#707070" stroke-width="1.2"/></svg></div>

<div class="sl" style="left:1046px;width:229px"></div>
<div class="trk" style="left:1059px;width:162px"></div>
<div class="thumb" style="left:1130px"><i></i></div>
<div class="btns" style="left:1233px"><b></b><svg width="37" height="18" viewBox="0 0 37 18"><path d="M12.2 4.2 L6.4 9 L12.2 13.8 M25.4 4.2 L31.2 9 L25.4 13.8" fill="none" stroke="#707070" stroke-width="1.2"/></svg></div>

<!-- ================= HEADER ================= -->
<div id="hdr">
  <svg style="left:0;top:0" width="40" height="45" viewBox="0 0 40 45">
    <polygon points="12.2,11.4 33.8,5.2 23,17.8 14.2,27.2" fill="#7b4a9c"/>
    <polygon points="23,17.8 31,30.6 14.4,27.2" fill="#2a1535"/>
    <polygon points="4.6,25.8 31,30.9 19.5,40.8" fill="#6d3c8c"/>
  </svg>
  <span class="t" style="left:40.5px;top:6.5px;font-size:22px;line-height:32px;letter-spacing:.7px;color:#2a1535">Slice<span style="color:#6b3a87">Vault</span></span>
  <span class="t" style="left:180px;top:13px;letter-spacing:.25px">Repository</span>
  <span class="t" style="left:290px;top:13px;letter-spacing:.22px">Queries</span>
  <div class="abs" style="left:1140px;top:12px;width:20px;height:20px;border-radius:50%;background:#24122f"></div>
  <span class="t" style="left:1140px;top:12px;width:20px;text-align:center;color:#fff;font-weight:700;font-size:17px;line-height:21px">?</span>
  <span class="t" style="left:1186px;top:13px;letter-spacing:-.2px">Reader 1</span>
  <svg style="left:1254px;top:19px" width="14" height="9" viewBox="0 0 14 9"><path d="M1 1 H13 L7 7.4 Z" fill="#24122f"/></svg>
</div>

</body>
</html>
